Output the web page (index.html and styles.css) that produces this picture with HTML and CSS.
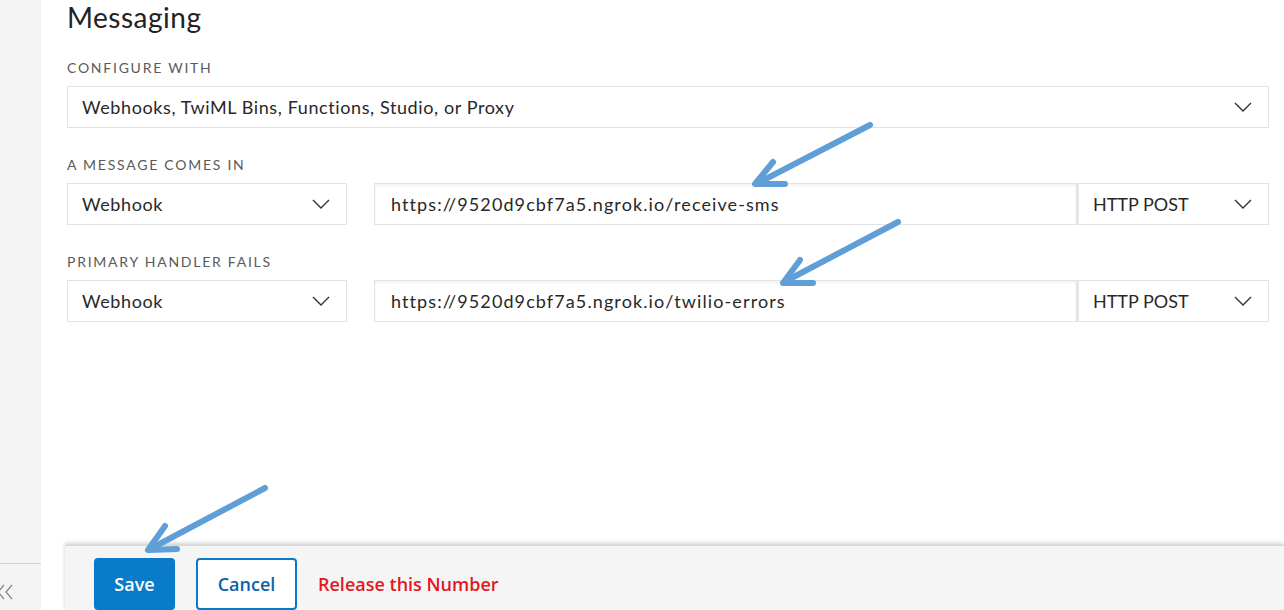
FILE: index.html
```html
<!DOCTYPE html>
<html>
<head>
<meta charset="utf-8">
<title>Messaging</title>
<link rel="stylesheet" href="styles.css">
</head>
<body>
<div class="page">
  <aside class="sidebar">
    <div class="collapse">
      <svg class="collapse-icon" width="18" height="16" viewBox="0 0 18 16"><path d="M7 1 L1 8 L7 15 M15 1 L9 8 L15 15" fill="none" stroke="#8a8a8a" stroke-width="1.3"/></svg>
    </div>
  </aside>
  <main class="main">
    <div class="content">
      <h1 class="title">Messaging</h1>
      <div class="field">
        <div class="label">Configure with</div>
        <div class="select select-full">
          <span>Webhooks, TwiML Bins, Functions, Studio, or Proxy</span>
          <svg class="chev" width="18" height="10" viewBox="0 0 18 10"><path d="M1 1 L9 9 L17 1" fill="none" stroke="#333" stroke-width="1.4"/></svg>
        </div>
      </div>
      <div class="field">
        <div class="label">A message comes in</div>
        <div class="row">
          <div class="select select-type">
            <span>Webhook</span>
            <svg class="chev" width="18" height="10" viewBox="0 0 18 10"><path d="M1 1 L9 9 L17 1" fill="none" stroke="#333" stroke-width="1.4"/></svg>
          </div>
          <div class="url-group">
            <div class="url">https://9520d9cbf7a5.ngrok.io/receive-sms</div>
            <div class="select select-method">
              <span>HTTP POST</span>
              <svg class="chev" width="18" height="10" viewBox="0 0 18 10"><path d="M1 1 L9 9 L17 1" fill="none" stroke="#333" stroke-width="1.4"/></svg>
            </div>
          </div>
        </div>
      </div>
      <div class="field">
        <div class="label">Primary handler fails</div>
        <div class="row">
          <div class="select select-type">
            <span>Webhook</span>
            <svg class="chev" width="18" height="10" viewBox="0 0 18 10"><path d="M1 1 L9 9 L17 1" fill="none" stroke="#333" stroke-width="1.4"/></svg>
          </div>
          <div class="url-group">
            <div class="url">https://9520d9cbf7a5.ngrok.io/twilio-errors</div>
            <div class="select select-method">
              <span>HTTP POST</span>
              <svg class="chev" width="18" height="10" viewBox="0 0 18 10"><path d="M1 1 L9 9 L17 1" fill="none" stroke="#333" stroke-width="1.4"/></svg>
            </div>
          </div>
        </div>
      </div>
    </div>
    <footer class="footer">
      <button class="btn btn-primary">Save</button>
      <button class="btn btn-secondary">Cancel</button>
      <a class="release">Release this Number</a>
    </footer>
  </main>
  <svg class="annotations" width="1284" height="610" viewBox="0 0 1284 610">
    <g fill="none" stroke="#5f9ed6" stroke-width="6" stroke-linecap="round" stroke-linejoin="round">
      <path d="M870 125 L756 184"/>
      <path d="M773 162 L755 184 L785 184"/>
      <path d="M898 222 L784 282"/>
      <path d="M800 260 L783 283 L813 283"/>
      <path d="M265 488 L150 549"/>
      <path d="M165 526 L148 550 L177 549"/>
    </g>
  </svg>
</div>
</body>
</html>
```
FILE: styles.css
```css
* { box-sizing: border-box; }
html, body { margin: 0; padding: 0; }
body {
  width: 1284px;
  height: 610px;
  overflow: hidden;
  background: #fff;
  font-family: Lato, "Open Sans", sans-serif;
  color: #282828;
}
.page {
  position: relative;
  display: flex;
  height: 610px;
}
.sidebar {
  width: 41px;
  flex: none;
  background: #f4f4f4;
  display: flex;
  flex-direction: column;
  justify-content: flex-end;
}
.collapse {
  height: 47px;
  border-top: 1px solid #d2d2d2;
  padding-top: 20px;
}
.collapse-icon {
  display: block;
  margin-left: -3px;
}
.main {
  flex: 1;
  display: flex;
  flex-direction: column;
  min-width: 0;
}
.content {
  flex: 1;
  padding: 0 15px 0 26px;
}
.title {
  margin: 0;
  font-size: 28px;
  line-height: 34px;
  font-weight: 400;
  letter-spacing: 0.5px;
  color: #222;
}
.field { margin-top: 24px; }
.field + .field { margin-top: 27px; }
.label {
  font-size: 14px;
  line-height: 20px;
  text-transform: uppercase;
  letter-spacing: 1.75px;
  color: #5a5a5a;
  margin-bottom: 8px;
}
.select {
  height: 42px;
  border: 1px solid #e3e3e3;
  background: #fff;
  display: flex;
  align-items: center;
  justify-content: space-between;
  padding: 0 16px 0 14px;
  font-size: 18px;
  letter-spacing: 0.6px;
}
.chev { display: block; flex: none; }
.row {
  display: flex;
  gap: 27px;
}
.select-type { width: 280px; flex: none; }
.url-group {
  flex: 1;
  display: flex;
}
.url {
  flex: 1;
  height: 42px;
  border: 1px solid #e3e3e3;
  box-shadow: inset 0 2px 3px rgba(0,0,0,0.05);
  padding: 0 16px;
  display: flex;
  align-items: center;
  font-size: 18px;
  letter-spacing: 1.1px;
}
.select-method {
  width: 192px;
  flex: none;
  border-left: 2px solid #e6e6e6;
  letter-spacing: 0;
}
.footer {
  margin-left: 24px;
  height: 65px;
  flex: none;
  background: #f5f5f5;
  border-top: 1px solid #d8d8d8;
  box-shadow: 0 -2px 4px rgba(0,0,0,0.18);
  display: flex;
  align-items: flex-start;
  gap: 21px;
  padding: 12px 0 0 29px;
  font-family: "Open Sans", Lato, sans-serif;
}
.btn {
  height: 52px;
  border-radius: 4px;
  font-family: "Open Sans", sans-serif;
  font-size: 18px;
  font-weight: 600;
  padding: 0;
  cursor: pointer;
}
.btn-primary {
  width: 81px;
  background: #0a7bc9;
  border: 2px solid #0a7bc9;
  color: #fff;
}
.btn-secondary {
  width: 101px;
  background: #fff;
  border: 2px solid #0a7bc9;
  color: #0b62a8;
}
.release {
  line-height: 52px;
  font-size: 18px;
  font-weight: 600;
  color: #e2171f;
}
.annotations {
  position: absolute;
  left: 0;
  top: 0;
  pointer-events: none;
}
```
